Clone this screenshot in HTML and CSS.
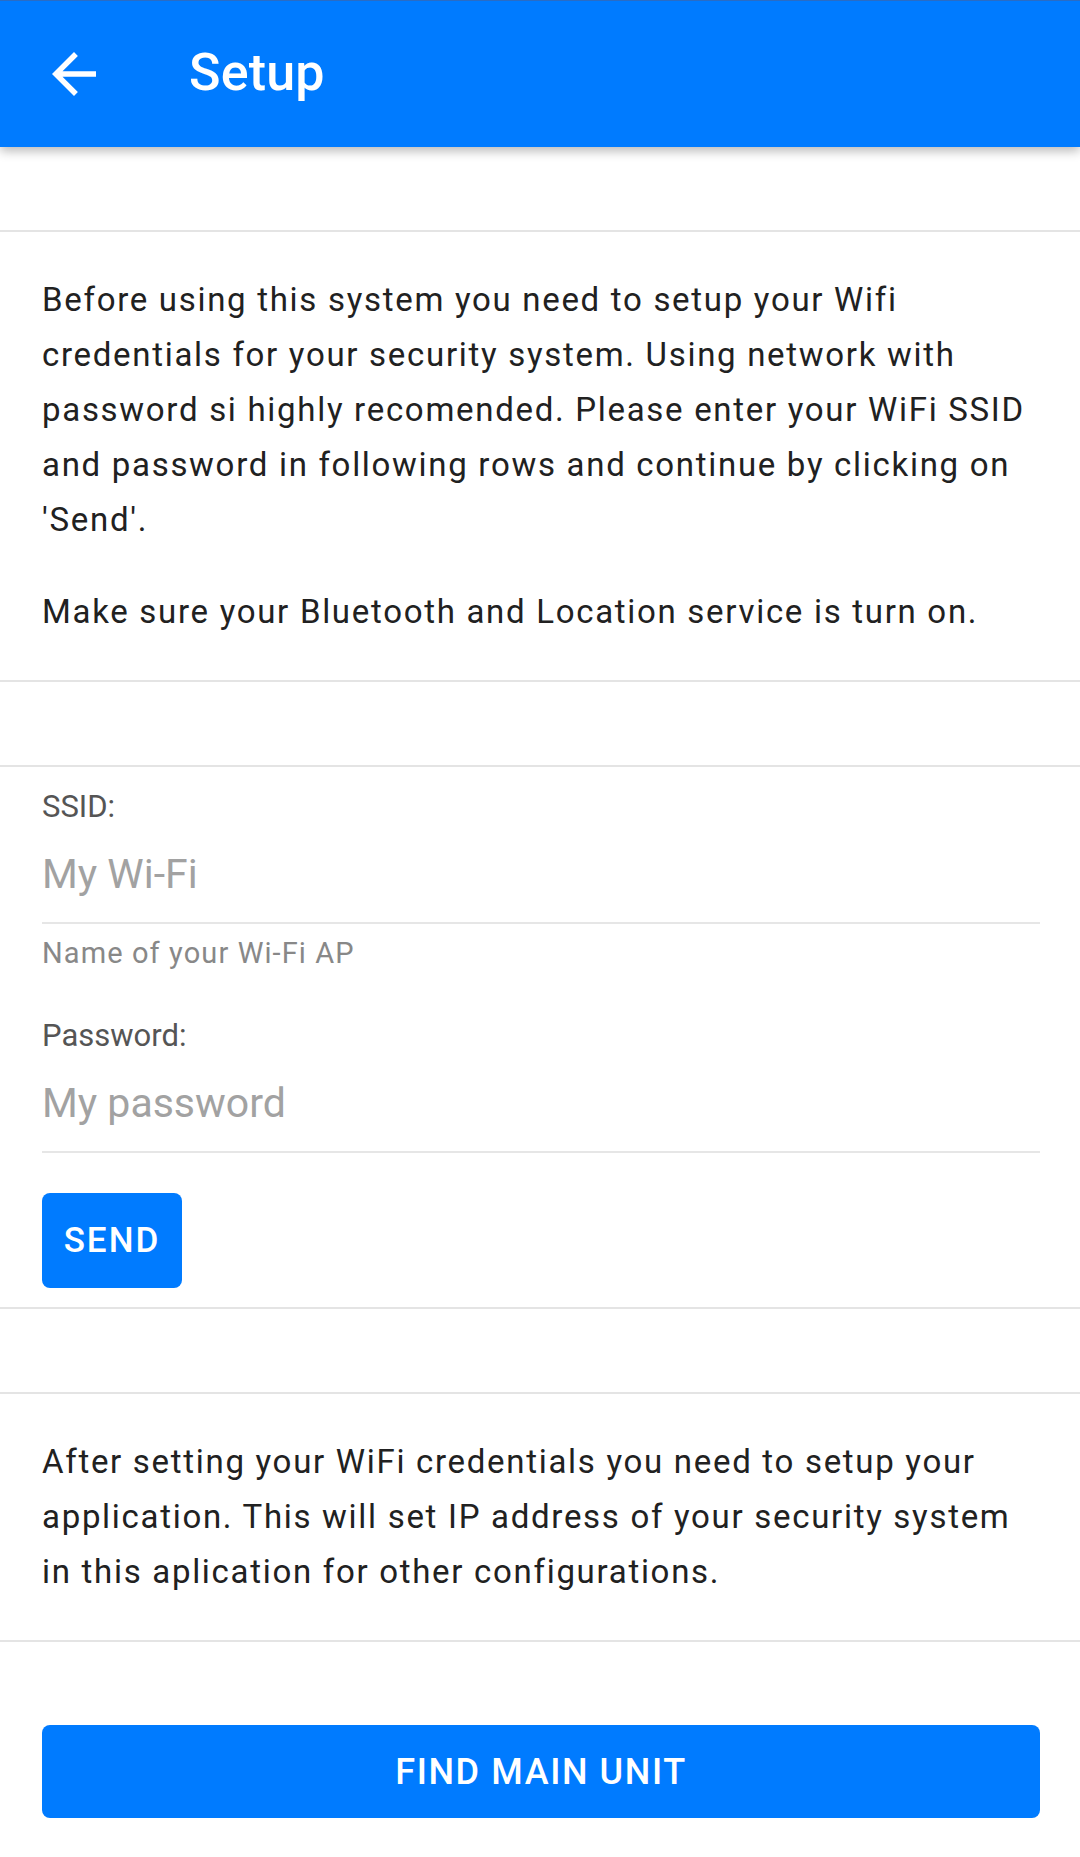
FILE: index.html
```html
<!DOCTYPE html>
<html lang="en">
<head>
<meta charset="utf-8">
<title>Setup</title>
<link rel="stylesheet" href="styles.css">
</head>
<body>
<div class="app">
  <header class="toolbar">
    <button class="back" aria-label="Back">
      <svg viewBox="0 0 24 24" width="66" height="66"><path fill="#fff" d="M20 11H7.83l5.59-5.59L12 4l-8 8 8 8 1.41-1.41L7.83 13H20v-2z"/></svg>
    </button>
    <h1 class="title">Setup</h1>
  </header>

  <div class="spacer spacer-top"></div>

  <section class="block text-block">
    <p>Before using this system you need to setup your Wifi credentials for your security system. Using network with password si highly recomended. Please enter your WiFi SSID and password in following rows and continue by clicking on 'Send'.</p>
    <p>Make sure your Bluetooth and Location service is turn on.</p>
  </section>

  <div class="spacer"></div>

  <section class="block form-block">
    <label class="field-label" for="ssid">SSID:</label>
    <input class="field-input" id="ssid" type="text" placeholder="My Wi-Fi">
    <div class="field-help">Name of your Wi-Fi AP</div>
    <label class="field-label field-label-second" for="pass">Password:</label>
    <input class="field-input" id="pass" type="text" placeholder="My password">
    <button class="btn btn-send">SEND</button>
  </section>

  <div class="spacer"></div>

  <section class="block text-block">
    <p>After setting your WiFi credentials you need to setup your application. This will set IP address of your security system in this aplication for other configurations.</p>
  </section>

  <div class="bottom">
    <button class="btn btn-find">FIND MAIN UNIT</button>
  </div>
</div>
</body>
</html>
```

FILE: styles.css
```css
* {
  box-sizing: border-box;
}

html, body {
  margin: 0;
  padding: 0;
  background: #ffffff;
}

body {
  font-family: Roboto, "Noto Sans", "Liberation Sans", sans-serif;
  color: #212121;
  width: 1080px;
  height: 1857px;
  overflow: hidden;
}

.app {
  display: flex;
  flex-direction: column;
}

.toolbar {
  position: relative;
  z-index: 2;
  height: 147px;
  background: #007bff;
  border-top: 1px solid #2a6cc4;
  display: flex;
  align-items: center;
  box-shadow: 0 4px 10px rgba(0, 0, 0, 0.28);
}

.back {
  margin-left: 41px;
  width: 66px;
  height: 66px;
  padding: 0;
  border: 0;
  background: transparent;
  display: flex;
  align-items: center;
  justify-content: center;
}

.back svg {
  display: block;
}

.title {
  margin: 0 0 0 82px;
  font-size: 52px;
  font-weight: 500;
  color: #ffffff;
  letter-spacing: 0.2px;
  line-height: 1;
  padding-bottom: 2px;
}

.spacer {
  height: 85px;
  border-bottom: 2px solid #e4e4e4;
}

.spacer-top {
  height: 85px;
}

.block {
  padding: 0 40px 0 42px;
  border-bottom: 2px solid #e4e4e4;
}

.text-block {
  padding-top: 40px;
  padding-bottom: 41px;
}

.text-block p {
  margin: 0;
  font-size: 33px;
  line-height: 55px;
  letter-spacing: 1.7px;
  color: #212121;
}

.text-block p + p {
  margin-top: 37px;
}

.form-block {
  padding-top: 22px;
  padding-bottom: 19px;
  display: flex;
  flex-direction: column;
  align-items: flex-start;
}

.field-label {
  font-size: 31px;
  line-height: 36px;
  color: #555555;
}

.field-label-second {
  margin-top: 48px;
}

.field-input {
  display: block;
  width: 100%;
  height: 99px;
  margin: 0;
  padding: 0;
  border: 0;
  border-bottom: 2px solid #e6e6e6;
  outline: none;
  background: transparent;
  font-family: Roboto, "Noto Sans", "Liberation Sans", sans-serif;
  font-size: 41px;
  color: #212121;
}

.field-input::placeholder {
  color: #a2a2a2;
  opacity: 1;
}

.field-help {
  margin-top: 12px;
  font-size: 29px;
  line-height: 34px;
  letter-spacing: 1.1px;
  color: #888888;
}

.btn {
  border: 0;
  border-radius: 8px;
  background: #007bff;
  color: #ffffff;
  font-family: Roboto, "Noto Sans", "Liberation Sans", sans-serif;
  font-weight: 500;
  padding: 0;
  cursor: pointer;
}

.btn-send {
  margin-top: 40px;
  width: 140px;
  height: 95px;
  font-size: 35px;
  letter-spacing: 2px;
}

.bottom {
  padding: 83px 40px 0 42px;
}

.btn-find {
  display: block;
  width: 100%;
  height: 93px;
  font-size: 36px;
  letter-spacing: 1.6px;
}
```
